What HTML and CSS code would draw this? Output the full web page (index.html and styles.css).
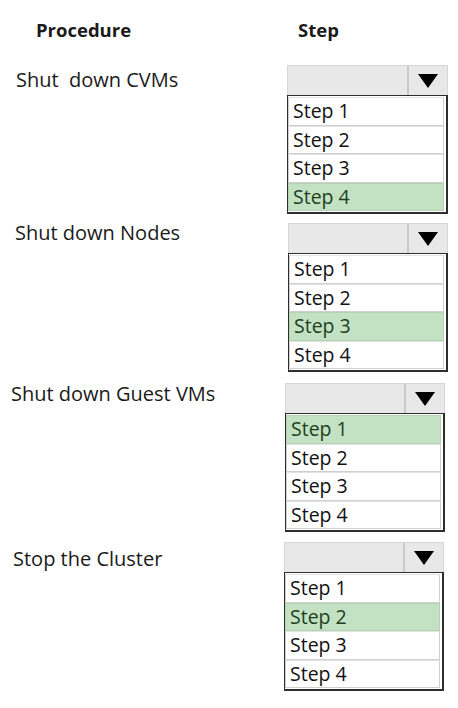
FILE: index.html
```html
<!DOCTYPE html>
<html lang="en">
<head>
<meta charset="utf-8">
<title>Procedure / Step</title>
<link rel="stylesheet" href="styles.css">
</head>
<body>
<div class="page">
  <div class="heads">
    <div class="head head-proc">Procedure</div>
    <div class="head head-step">Step</div>
  </div>

  <div class="item item-1">
    <div class="label">Shut&nbsp; down CVMs</div>
    <div class="dd">
      <div class="dd-box"><span class="dd-val"></span><span class="dd-btn"><svg width="20" height="14" viewBox="0 0 20 14"><polygon points="0,0 20,0 10,14" fill="#000"/></svg></span></div>
      <div class="dd-list">
        <div class="opt">Step 1</div>
        <div class="opt">Step 2</div>
        <div class="opt">Step 3</div>
        <div class="opt sel">Step 4</div>
      </div>
    </div>
  </div>

  <div class="item item-2">
    <div class="label">Shut down Nodes</div>
    <div class="dd">
      <div class="dd-box"><span class="dd-val"></span><span class="dd-btn"><svg width="20" height="14" viewBox="0 0 20 14"><polygon points="0,0 20,0 10,14" fill="#000"/></svg></span></div>
      <div class="dd-list">
        <div class="opt">Step 1</div>
        <div class="opt">Step 2</div>
        <div class="opt sel">Step 3</div>
        <div class="opt">Step 4</div>
      </div>
    </div>
  </div>

  <div class="item item-3">
    <div class="label">Shut down Guest VMs</div>
    <div class="dd">
      <div class="dd-box"><span class="dd-val"></span><span class="dd-btn"><svg width="20" height="14" viewBox="0 0 20 14"><polygon points="0,0 20,0 10,14" fill="#000"/></svg></span></div>
      <div class="dd-list">
        <div class="opt sel">Step 1</div>
        <div class="opt">Step 2</div>
        <div class="opt">Step 3</div>
        <div class="opt">Step 4</div>
      </div>
    </div>
  </div>

  <div class="item item-4">
    <div class="label">Stop the Cluster</div>
    <div class="dd">
      <div class="dd-box"><span class="dd-val"></span><span class="dd-btn"><svg width="20" height="14" viewBox="0 0 20 14"><polygon points="0,0 20,0 10,14" fill="#000"/></svg></span></div>
      <div class="dd-list">
        <div class="opt">Step 1</div>
        <div class="opt sel">Step 2</div>
        <div class="opt">Step 3</div>
        <div class="opt">Step 4</div>
      </div>
    </div>
  </div>
</div>
</body>
</html>
```

FILE: styles.css
```css
html, body {
  margin: 0;
  padding: 0;
  background: #fff;
}

body {
  font-family: "Open Sans", "Noto Sans", "DejaVu Sans", sans-serif;
  color: #1a1a1a;
  width: 458px;
  height: 708px;
  overflow: hidden;
}

.page {
  display: flex;
  flex-direction: column;
  padding-top: 17px;
}

.heads {
  display: grid;
  grid-template-columns: 262px 1fr;
  height: 48px;
}

.head {
  font-weight: 700;
  font-size: 18.5px;
  line-height: 26px;
  color: #1a1a1a;
}

.head-proc { padding-left: 36px; }
.head-step { padding-left: 36px; }

.item {
  display: grid;
  grid-template-columns: 287px 161px;
  align-items: start;
}

.item-1 { margin-top: 0; }
.item-2 { margin-top: 9px; grid-template-columns: 288px 160px; }
.item-3 { margin-top: 11px; grid-template-columns: 285px 160px; }
.item-4 { margin-top: 10px; grid-template-columns: 284px 160px; }

.label {
  font-size: 20px;
  line-height: 26px;
  color: #1a1a1a;
  white-space: nowrap;
}

.item-1 .label { padding-left: 16px; margin-top: 2px; }
.item-2 .label { padding-left: 15px; margin-top: -3px; }
.item-3 .label { padding-left: 11px; margin-top: -2px; }
.item-4 .label { padding-left: 13px; margin-top: 4px; }

.dd {
  display: flex;
  flex-direction: column;
}

.dd-box {
  display: flex;
  height: 30px;
  box-sizing: border-box;
  background: #e8e8e8;
  border: 1px solid #d6d6d6;
  border-bottom: none;
}

.dd-val {
  flex: 1;
}

.dd-btn {
  width: 38px;
  border-left: 2px solid #c9c9c9;
  display: flex;
  align-items: center;
  justify-content: center;
  padding-top: 1px;
}

.dd-btn svg {
  display: block;
}

.dd-list {
  height: 119px;
  box-sizing: border-box;
  border: 1px solid #2e2e2e;
  border-width: 1px 2px 2px 1px;
  padding: 1px 2px 1px 0;
  display: flex;
  flex-direction: column;
  background: #fff;
}

.opt {
  flex: 1;
  box-sizing: border-box;
  border: 1px solid #cfcfcf;
  border-top-color: #e2e2e2;
  padding-left: 4px;
  font-size: 19.5px;
  line-height: 25px;
  color: #111;
}

.opt.sel {
  background: #c3e1c3;
  color: #1d3f1d;
  border-color: #b3d3b3;
}
```
